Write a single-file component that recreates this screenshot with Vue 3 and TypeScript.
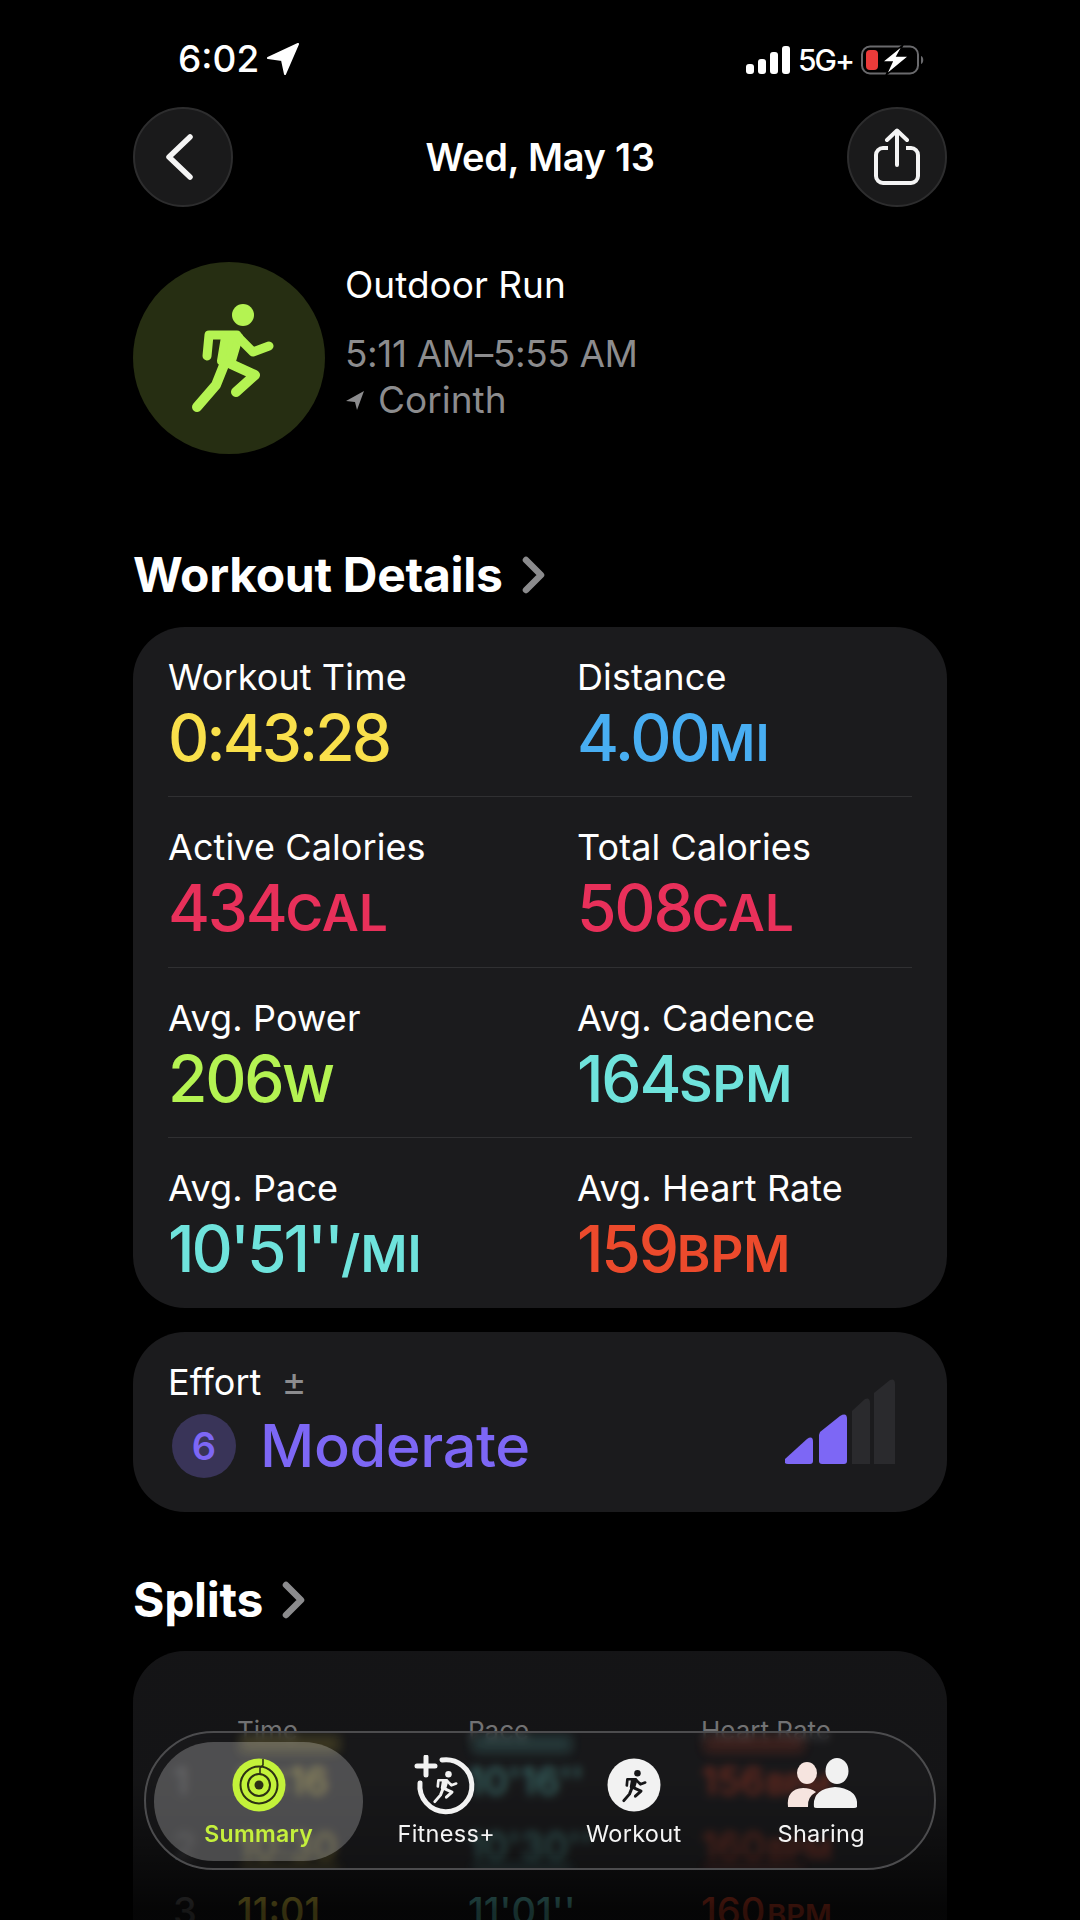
<script setup lang="ts">
interface Metric {
  label: string
  value: string
  unit?: string
  color: string
  tight?: boolean
}

interface SplitRow {
  num: number
  time: string
  pace: string
  rate: string
}

const metrics: Metric[] = [
  {label: 'Workout Time', value: '0:43:28', color: '#f9e04b', tight: true},
  {label: 'Distance', value: '4.00', unit: 'MI', color: '#48aef2'},
  {label: 'Active Calories', value: '434', unit: 'CAL', color: '#e8305a'},
  {label: 'Total Calories', value: '508', unit: 'CAL', color: '#e8305a'},
  {label: 'Avg. Power', value: '206', unit: 'W', color: '#b4f352'},
  {label: 'Avg. Cadence', value: '164', unit: 'SPM', color: '#6fe3dc'},
  {label: 'Avg. Pace', value: "10'51''", unit: '/MI', color: '#6fe3dc', tight: true},
  {label: 'Avg. Heart Rate', value: '159', unit: 'BPM', color: '#ec4a2c'},
]

const splits: SplitRow[] = [
  {num: 1, time: '10:16', pace: "10'16''", rate: '156'},
  {num: 2, time: '10:30', pace: "10'30''", rate: '160'},
  {num: 3, time: '11:01', pace: "11'01''", rate: '160'},
]

const echoes = ['#f9e04b', '#6fe3dc', '#ec4a2c']
</script>

<template>
  <div class="page">
    <svg class="defs" width="0" height="0">
      <symbol id="runner" viewBox="55 35 90 118">
        <circle cx="110" cy="53" r="11" fill="currentColor" stroke="none" />
        <g fill="none" stroke="currentColor" stroke-linecap="round" stroke-linejoin="round">
          <path d="M74 94 L76 73 L104 73" stroke-width="9" />
          <path d="M92 75 L106 75 L99 99 L88 99 Z" fill="currentColor" stroke-width="8" />
          <path d="M106 76 L120 90 L136 84" stroke-width="9" />
          <path d="M98 102 L122 113 L103 130" stroke-width="10" />
          <path d="M91 103 L83 123 L64 145" stroke-width="10" />
        </g>
      </symbol>
    </svg>

    <div class="status">
      <div class="status-left">
        <span class="clock">6:02</span>
        <svg width="32" height="32" viewBox="0 0 32 32"><path d="M31 1 L1 15 L15 17 L18 31 Z" fill="#fff" stroke="#fff" stroke-width="2" stroke-linejoin="round" /></svg>
      </div>
      <div class="status-right">
        <div class="signal">
          <i style="height: 10px"></i>
          <i style="height: 15px"></i>
          <i style="height: 22px"></i>
          <i style="height: 28px"></i>
        </div>
        <span class="net">5G+</span>
        <svg width="64" height="30" viewBox="0 0 64 30">
          <rect x="1" y="1.5" width="56" height="27" rx="8" fill="none" stroke="#6a6a6d" stroke-width="2" />
          <rect x="5" y="5" width="12" height="20" rx="4" fill="#eb3b3a" />
          <path d="M60 11 C63 12 63 18 60 19 Z" fill="#6a6a6d" />
          <path d="M42 0 L21 17 H31 L25 30 L48 11 H36 Z" fill="#fff" stroke="#000" stroke-width="1.5" />
        </svg>
      </div>
    </div>

    <div class="nav">
      <button class="round back">
        <svg width="30" height="46" viewBox="0 0 30 46"><path d="M26 3 L5 23 L26 43" fill="none" stroke="#f4f4f4" stroke-width="5.5" stroke-linecap="round" stroke-linejoin="round" /></svg>
      </button>
      <span class="nav-title">Wed, May 13</span>
      <button class="round">
        <svg width="48" height="58" viewBox="0 0 48 58">
          <path d="M15 20 H10 A7 7 0 0 0 3 27 V48 A7 7 0 0 0 10 55 H38 A7 7 0 0 0 45 48 V27 A7 7 0 0 0 38 20 H33" fill="none" stroke="#f4f4f4" stroke-width="4" />
          <path d="M24 37 V3 M14 12 L24 2.5 L34 12" fill="none" stroke="#f4f4f4" stroke-width="4" stroke-linecap="round" stroke-linejoin="round" />
        </svg>
      </button>
    </div>

    <div class="hero">
      <div class="hero-icon">
        <svg class="hero-runner" width="90" height="118"><use href="#runner" /></svg>
      </div>
      <div class="hero-text">
        <div class="hero-name">Outdoor Run</div>
        <div class="hero-sub hero-time">5:11 AM–5:55 AM</div>
        <div class="hero-sub hero-place">
          <svg width="20" height="20" viewBox="0 0 20 20"><path d="M19 1 L1 11 L10 12 L12 20 Z" fill="#8c8c8e" /></svg>
          <span>Corinth</span>
        </div>
      </div>
    </div>

    <div class="section-head first">
      <span>Workout Details</span>
      <svg width="26" height="38" viewBox="0 0 26 38"><path d="M5 4 L20 19 L5 34" fill="none" stroke="#8b8b8d" stroke-width="6.5" stroke-linecap="round" stroke-linejoin="round" /></svg>
    </div>

    <div class="card metrics">
      <div v-for="m in metrics" :key="m.label" class="metric">
        <div class="metric-label">{{ m.label }}</div>
        <div class="metric-value" :class="{ tight: m.tight }" :style="{ color: m.color }">
          {{ m.value }}<span v-if="m.unit" class="unit">{{ m.unit }}</span>
        </div>
      </div>
    </div>

    <div class="card effort">
      <div class="effort-left">
        <div class="effort-label">Effort <span class="plusminus">±</span></div>
        <div class="effort-row">
          <span class="badge">6</span>
          <span class="effort-word">Moderate</span>
        </div>
      </div>
      <svg class="effort-bars" width="112" height="86" viewBox="0 0 112 86">
        <path d="M0 80 L22 60 Q28 56 28 63 V82 Q28 85 25 85 H3 Q-2 85 0 80 Z" fill="#7d67f5" />
        <path d="M35 53 L55 37 Q62 33 62 40 V82 Q62 85 59 85 H37 Q34 85 34 82 V56 Z" fill="#7d67f5" />
        <path d="M67 32 L80 20 Q85 18 85 24 V85 H67 Z" fill="#2a2a2d" />
        <path d="M89 14 L105 1 Q110 -1 110 5 V85 H89 Z" fill="#2a2a2d" />
      </svg>
    </div>

    <div class="section-head second">
      <span>Splits</span>
      <svg width="26" height="38" viewBox="0 0 26 38"><path d="M5 4 L20 19 L5 34" fill="none" stroke="#8b8b8d" stroke-width="6.5" stroke-linecap="round" stroke-linejoin="round" /></svg>
    </div>

    <div class="card splits">
      <div class="split-grid split-head">
        <span></span>
        <span>Time</span>
        <span>Pace</span>
        <span>Heart Rate</span>
      </div>
      <div v-for="s in splits" :key="s.num" class="split-grid split-row">
        <span class="split-num">{{ s.num }}</span>
        <span class="c-time">{{ s.time }}</span>
        <span class="c-pace">{{ s.pace }}</span>
        <span class="c-rate">{{ s.rate }}<small>BPM</small></span>
      </div>
    </div>

    <nav class="tabbar">
      <div class="echo echo-top">
        <i v-for="c in echoes" :key="c" :style="{ background: c }"></i>
      </div>
      <div class="echo echo-bottom">
        <i v-for="c in echoes" :key="c" :style="{ background: c }"></i>
      </div>
      <div class="tab-pill"></div>
      <div class="tab active">
        <svg width="54" height="54" viewBox="0 0 54 54">
          <circle cx="27" cy="27" r="26.5" fill="#c3f23a" />
          <circle cx="27" cy="27" r="18.5" fill="none" stroke="#2c3014" stroke-width="2" />
          <circle cx="27" cy="27" r="11" fill="none" stroke="#2c3014" stroke-width="2" />
          <circle cx="27" cy="27" r="4.5" fill="#2c3014" />
          <path d="M31 1 V7 L28 10 V16" fill="none" stroke="#2c3014" stroke-width="1.6" />
        </svg>
        <span>Summary</span>
      </div>
      <div class="tab">
        <svg width="64" height="60" viewBox="0 0 64 60">
          <path d="M28 5 A26 26 0 1 1 6 28" fill="none" stroke="#f2f2f2" stroke-width="5" stroke-linecap="round" />
          <path d="M12 2 V20 M3 11 H21" fill="none" stroke="#f2f2f2" stroke-width="5" stroke-linecap="round" />
          <svg x="18" y="14" width="27" height="35" color="#f2f2f2"><use href="#runner" /></svg>
        </svg>
        <span>Fitness+</span>
      </div>
      <div class="tab">
        <svg width="54" height="54" viewBox="0 0 54 54">
          <circle cx="27" cy="27" r="26.5" fill="#f2f2f2" />
          <svg x="14" y="10" width="27" height="35" color="#161618"><use href="#runner" /></svg>
        </svg>
        <span>Workout</span>
      </div>
      <div class="tab">
        <svg width="72" height="54" viewBox="0 0 72 54">
          <ellipse cx="52" cy="13" rx="11.5" ry="13" fill="#f1f1f1" />
          <ellipse cx="22" cy="15" rx="10" ry="11" fill="#f6e4df" />
          <path d="M3 49 Q1 31 18 30 Q26 30 31 34 Q22 39 23 49 Z" fill="#f6e4df" />
          <path d="M29 49 Q27 31 50 29 Q74 31 72 49 Q71 50 69 50 H32 Q29 50 29 49 Z" fill="#f1f1f1" />
        </svg>
        <span>Sharing</span>
      </div>
    </nav>
  </div>
</template>

<style>
html, body {
  margin: 0;
  background: #000;
}
</style>

<style scoped>
.page {
  position: relative;
  width: 1080px;
  height: 1920px;
  overflow: hidden;
  background: #000;
  color: #fff;
  font-family: Inter, "Liberation Sans", sans-serif;
  box-sizing: border-box;
  padding: 0 133px;
}

.defs {
  position: absolute;
}

.status {
  height: 107px;
  display: flex;
  justify-content: space-between;
  align-items: flex-start;
  padding: 40px 0 0 45px;
  box-sizing: border-box;
}

.status-left {
  display: flex;
  align-items: center;
  gap: 8px;
}

.clock {
  font-size: 37px;
  font-weight: 500;
  line-height: 38px;
}

.status-right {
  display: flex;
  align-items: center;
  margin: 2px 22px 0 0;
  gap: 8px;
}

.signal {
  display: flex;
  align-items: flex-end;
  gap: 4px;
  height: 28px;
}

.signal i {
  display: block;
  width: 8px;
  border-radius: 3px;
  background: #fff;
}

.net {
  font-size: 30px;
  font-weight: 500;
  letter-spacing: -2px;
}

.nav {
  display: flex;
  justify-content: space-between;
  align-items: center;
  height: 100px;
}

.round {
  width: 100px;
  height: 100px;
  padding: 0;
  border-radius: 50%;
  background: #1a1a1b;
  border: 2px solid #2d2d2e;
  display: flex;
  align-items: center;
  justify-content: center;
  box-sizing: border-box;
}

.round.back svg {
  margin-left: -8px;
}

.nav-title {
  font-size: 38px;
  font-weight: 600;
  letter-spacing: -0.3px;
}

.hero {
  display: flex;
  gap: 20px;
  margin-top: 55px;
}

.hero-icon {
  width: 192px;
  height: 192px;
  border-radius: 50%;
  background: #262e12;
  color: #b4f352;
  display: flex;
  align-items: center;
  justify-content: center;
}

.hero-runner {
  margin: -4px 0 0 8px;
}

.hero-name {
  font-size: 37px;
  line-height: 44px;
  margin-top: 1px;
}

.hero-sub {
  font-size: 37px;
  color: #8c8c8e;
  line-height: 46px;
}

.hero-time {
  margin-top: 24px;
  letter-spacing: -0.4px;
}

.hero-place {
  display: flex;
  align-items: center;
  gap: 13px;
}

.section-head {
  display: flex;
  align-items: center;
  gap: 18px;
  font-size: 48px;
  line-height: 54px;
  font-weight: 700;
  letter-spacing: -0.3px;
}

.section-head.first {
  margin-top: 94px;
}

.section-head.second {
  margin-top: 61px;
}

.card {
  background: #1b1b1d;
  border-radius: 52px;
}

.metrics {
  margin-top: 25px;
  height: 681px;
  box-sizing: border-box;
  padding: 0 35px;
  display: grid;
  grid-template-columns: 409px 1fr;
  grid-auto-rows: 170.25px;
}

.metric {
  padding-top: 29px;
  box-sizing: border-box;
  border-bottom: 1px solid #303032;
}

.metric:nth-last-child(-n + 2) {
  border-bottom: none;
}

.metric-label {
  font-size: 36px;
  line-height: 42px;
  letter-spacing: 0.1px;
}

.metric-value {
  font-size: 64px;
  font-weight: 500;
  line-height: 72px;
  letter-spacing: -2.2px;
  margin-top: 4px;
}

.metric-value.tight {
  letter-spacing: -3px;
}

.unit {
  font-size: 51px;
  font-weight: 600;
  letter-spacing: 0;
}

.effort {
  margin-top: 24px;
  height: 180px;
  padding: 29px 50px 0 35px;
  box-sizing: border-box;
  display: flex;
  justify-content: space-between;
}

.effort-label {
  font-size: 36px;
  line-height: 42px;
}

.plusminus {
  color: #8c8c8e;
  font-size: 38px;
  line-height: 36px;
  margin-left: 10px;
}

.effort-row {
  display: flex;
  align-items: center;
  gap: 24px;
  margin: 7px 0 0 4px;
}

.badge {
  width: 64px;
  height: 64px;
  border-radius: 50%;
  background: #393458;
  color: #7d67f5;
  font-size: 38px;
  font-weight: 600;
  display: flex;
  align-items: center;
  justify-content: center;
}

.effort-word {
  font-size: 59.5px;
  font-weight: 500;
  color: #7d67f5;
  letter-spacing: -0.4px;
  margin-top: -1px;
}

.effort-bars {
  margin-top: 18px;
}

.splits {
  position: relative;
  margin-top: 24px;
  height: 400px;
  padding-top: 64px;
  box-sizing: border-box;
}

.splits::after {
  content: "";
  position: absolute;
  inset: 0;
  border-radius: 52px;
  background: linear-gradient(rgba(0, 0, 0, 0.25), rgba(0, 0, 0, 0.25) 32%, rgba(0, 0, 0, 0.5) 49%, rgba(0, 0, 0, 0.8) 65%);
}

.split-grid {
  display: grid;
  grid-template-columns: 104px 231px 233px 1fr;
}

.split-head {
  font-size: 26px;
  line-height: 32px;
  color: #98989a;
  margin-bottom: 1px;
}

.split-row {
  font-size: 38px;
  font-weight: 500;
  height: 65px;
  align-items: center;
}

.split-num {
  padding-left: 40px;
  color: #6d6d6f;
}

.c-time {
  color: #f9e04b;
}

.c-pace {
  color: #6fe3dc;
}

.c-rate {
  color: #ec4a2c;
}

.c-rate small {
  font-size: 29px;
  font-weight: 600;
  margin-left: 2px;
}

.tabbar {
  position: absolute;
  left: 144px;
  top: 1731px;
  width: 792px;
  height: 139px;
  border-radius: 70px;
  padding: 0 19px;
  box-sizing: border-box;
  display: flex;
  background: rgba(28, 28, 30, 0.45);
  backdrop-filter: blur(4px);
  -webkit-backdrop-filter: blur(4px);
  border: 2px solid #4c4c4e;
  overflow: hidden;
}

.echo {
  position: absolute;
  left: 94px;
  display: flex;
  opacity: 0.16;
  filter: blur(6px);
}

.echo i {
  display: block;
  width: 100px;
  margin-right: 132px;
}

.echo-top {
  top: 2px;
  height: 18px;
}

.echo-bottom {
  bottom: -3px;
  height: 6px;
}

.tab-pill {
  position: absolute;
  left: 8px;
  top: 9px;
  width: 209px;
  height: 119px;
  border-radius: 60px;
  background: rgba(255, 255, 255, 0.24);
}

.tab {
  position: relative;
  width: 188px;
  display: flex;
  flex-direction: column;
  align-items: center;
  font-size: 23.5px;
  color: #f4f4f4;
  letter-spacing: 0.3px;
}

.tab svg {
  display: block;
}

.tab > svg {
  height: 60px;
  margin-top: 22px;
}

.tab > span {
  margin-top: 4px;
  line-height: 30px;
}

.tab.active > span {
  color: #c5f03c;
  font-weight: 600;
  font-size: 23px;
}
</style>
